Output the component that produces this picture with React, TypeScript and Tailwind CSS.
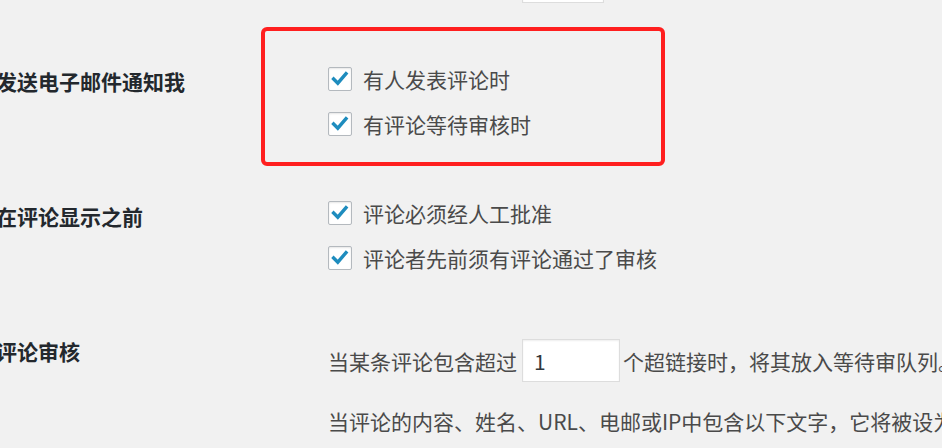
import React from "react";

const font = { fontFamily: '"Noto Sans CJK SC", "Noto Sans", sans-serif' };

function Checkbox() {
  return (
    <span className="flex h-[24px] w-[24px] shrink-0 items-center justify-center rounded-[2px] border border-[#b4b9be] bg-white shadow-[inset_0_1px_2px_rgba(0,0,0,0.1)]">
      <svg width="20" height="20" viewBox="0 0 20 20">
        <path d="M3.6 10 L7.8 14.2 L16 4.6" fill="none" stroke="#1e8cbe" strokeWidth="3.4" strokeLinecap="square" strokeLinejoin="miter" />
      </svg>
    </span>
  );
}

function CheckRow({ label }: { label: string }) {
  return (
    <label className="flex h-[24px] items-center gap-[11px] text-[21px] leading-[24px] text-[#4a4a4a]">
      <Checkbox />
      <span className="whitespace-nowrap">{label}</span>
    </label>
  );
}

export default function App() {
  return (
    <div className="relative h-[448px] w-[942px] overflow-hidden bg-[#f1f1f1]" style={font}>
      {/* previous field, cut off at the top */}
      <div className="ml-[522px] mt-[-40px] h-[43px] w-[82px] border border-[#ddd] bg-white shadow-[inset_0_1px_2px_rgba(0,0,0,0.07)]" />

      {/* email notify */}
      <div className="flex pt-[64px]">
        <div className="ml-[-4px] w-[332px] shrink-0 pt-[2px] text-[21px] font-bold leading-[24px] text-[#23282d] whitespace-nowrap">发送电子邮件通知我</div>
        <div className="flex flex-col gap-[21px]">
          <CheckRow label="有人发表评论时" />
          <CheckRow label="有评论等待审核时" />
        </div>
      </div>

      {/* before a comment appears */}
      <div className="flex pt-[65px]">
        <div className="ml-[-4px] w-[332px] shrink-0 pt-[3px] text-[21px] font-bold leading-[24px] text-[#23282d] whitespace-nowrap">在评论显示之前</div>
        <div className="flex flex-col gap-[21px]">
          <CheckRow label="评论必须经人工批准" />
          <CheckRow label="评论者先前须有评论通过了审核" />
        </div>
      </div>

      {/* moderation */}
      <div className="flex pt-[69px]">
        <div className="ml-[-4px] w-[332px] shrink-0 text-[21px] font-bold leading-[24px] text-[#23282d] whitespace-nowrap">评论审核</div>
        <div className="flex flex-col text-[21px] leading-[24px] text-[#4a4a4a] whitespace-nowrap">
          <div className="flex h-[43px] items-center">
            <span>当某条评论包含超过</span>
            <span className="ml-[5px] mr-[3px] flex h-[43px] w-[98px] shrink-0 items-center border border-[#ddd] bg-white px-[11px] text-[#32373c] shadow-[inset_0_1px_2px_rgba(0,0,0,0.07)]">1</span>
            <span>个超链接时，将其放入等待审队列。</span>
          </div>
          <div className="mt-[27px]">当评论的内容、姓名、URL、电邮或IP中包含以下文字，它将被设为待审。</div>
        </div>
      </div>

      {/* red annotation frame */}
      <div className="pointer-events-none absolute left-[261px] top-[27px] h-[139px] w-[404px] rounded-[6px] border-[4px] border-[#ff1f1f]" />
    </div>
  );
}
